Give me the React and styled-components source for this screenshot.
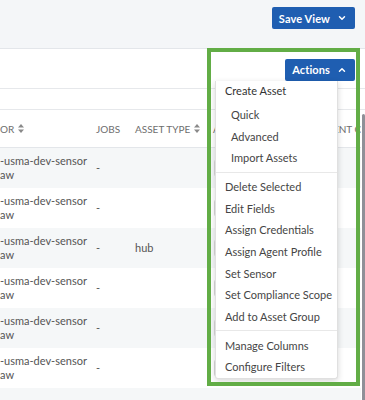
import React from "react";
import styled, { createGlobalStyle } from "styled-components";
import { ChevronDown, ChevronUp } from "lucide-react";

const GlobalStyle = createGlobalStyle`
  html, body {
    margin: 0;
    padding: 0;
    background: #ffffff;
    font-family: Lato, "Liberation Sans", Arial, sans-serif;
  }
  * { box-sizing: border-box; }
`;

const rows = [
    { host: "-usma-dev-sensor", sub: "aw", jobs: "-", type: "" },
    { host: "-usma-dev-sensor", sub: "aw", jobs: "-", type: "" },
    { host: "-usma-dev-sensor", sub: "aw", jobs: "-", type: "hub" },
    { host: "-usma-dev-sensor", sub: "aw", jobs: "-", type: "" },
    { host: "-usma-dev-sensor", sub: "aw", jobs: "-", type: "" },
    { host: "-usma-dev-sensor", sub: "aw", jobs: "-", type: "" },
    { host: "", sub: "", jobs: "", type: "" },
];

const menu = [
    { label: "Create Asset", kind: "header" },
    { label: "Quick", kind: "sub" },
    { label: "Advanced", kind: "sub" },
    { label: "Import Assets", kind: "sub" },
    { kind: "divider" },
    { label: "Delete Selected" },
    { label: "Edit Fields" },
    { label: "Assign Credentials" },
    { label: "Assign Agent Profile" },
    { label: "Set Sensor" },
    { label: "Set Compliance Scope" },
    { label: "Add to Asset Group" },
    { kind: "divider" },
    { label: "Manage Columns" },
    { label: "Configure Filters" },
];

function SortIcon() {
    return (
        <svg width="6" height="9" viewBox="0 0 6 9">
            <path d="M3 0 L6 3.4 H0 Z" fill="#8a8a8a"/>
            <path d="M3 9 L6 5.6 H0 Z" fill="#8a8a8a"/>
        </svg>
    )
}

export default function App() {
    return (
        <Page>
            <GlobalStyle/>
            <TopBar>
                <BlueButton>
                    Save View <ChevronDown size={10} strokeWidth={3.5}/>
                </BlueButton>
            </TopBar>

            <Toolbar>
                <ActionWrap>
                    <BlueButton>
                        Actions <ChevronUp size={10} strokeWidth={3.5}/>
                    </BlueButton>
                    <Menu>
                        {menu.map((item, i) => {
                            if (item.kind === "divider") return <Divider key={i}/>
                            if (item.kind === "header") return <MenuHeader key={i}>{item.label}</MenuHeader>
                            return <MenuItem key={i} $sub={item.kind === "sub"}>{item.label}</MenuItem>
                        })}
                    </Menu>
                </ActionWrap>
            </Toolbar>

            <Spacer/>

            <TableArea>
                <Table>
                    <HeadRow>
                        <HeadCell>OR <SortIcon/></HeadCell>
                        <HeadCell>JOBS</HeadCell>
                        <HeadCell>ASSET TYPE <SortIcon/></HeadCell>
                        <HeadCell>AGENT</HeadCell>
                        <HeadCell>AGENT COUNT</HeadCell>
                    </HeadRow>
                    {rows.map((r, i) => (
                        <Row key={i} $striped={i % 2 === 0}>
                            <Cell>{r.host}<br/>{r.sub}</Cell>
                            <Cell>{r.jobs}</Cell>
                            <Cell>{r.type}</Cell>
                            <Cell>{r.host && <FieldBox/>}</Cell>
                            <Cell/>
                        </Row>
                    ))}
                </Table>
                <ScrollTrack>
                    <Thumb/>
                </ScrollTrack>
            </TableArea>

            <Highlight/>
        </Page>
    )
}

const Page = styled.div`
  position: relative;
  width: 365px;
  height: 400px;
  overflow: hidden;
`

const TopBar = styled.div`
  height: 49px;
  background: #f4f6f8;
  border-bottom: 1px solid #e3e6ea;
  display: flex;
  justify-content: flex-end;
  align-items: flex-start;
  padding: 7px 10px 0 0;
`

const BlueButton = styled.button`
  height: 22px;
  display: inline-flex;
  align-items: center;
  gap: 7px;
  padding: 0 8px 0 7px;
  border: none;
  border-radius: 2px;
  background: #1f5eb1;
  color: #ffffff;
  font-family: inherit;
  font-size: 11px;
  font-weight: 700;
  letter-spacing: 0.1px;
  cursor: pointer;
`

const Toolbar = styled.div`
  height: 40px;
  border-bottom: 1px solid #e6e8eb;
  display: flex;
  justify-content: flex-end;
  align-items: flex-start;
  padding: 9px 10px 0 0;
`

const ActionWrap = styled.div`
  position: relative;
  z-index: 2;
`

const Menu = styled.div`
  position: absolute;
  top: 100%;
  right: 17px;
  width: 123px;
  background: #ffffff;
  border: 1px solid #e0e0e0;
  border-top: none;
  border-radius: 0 0 3px 3px;
  box-shadow: 0 2px 6px rgba(0, 0, 0, 0.16);
`

const MenuHeader = styled.div`
  height: 20px;
  margin-bottom: 3px;
  display: flex;
  align-items: center;
  padding-left: 9px;
  font-size: 11px;
  color: #333333;
`

const MenuItem = styled.div`
  height: 21.7px;
  display: flex;
  align-items: center;
  padding-left: ${p => p.$sub ? "15px" : "9px"};
  font-size: 11px;
  color: #454545;
  white-space: nowrap;
`

const Divider = styled.div`
  height: 1px;
  margin: 3px 0;
  background: #e8e8e8;
`

const Spacer = styled.div`
  height: 21px;
  border-bottom: 1px solid #e6e8eb;
`

const TableArea = styled.div`
  display: flex;
`

const Table = styled.div`
  flex: 1;
  overflow: hidden;
`

const grid = `
  display: grid;
  grid-template-columns: 96px 39px 78px 106px 1fr;
`

const HeadRow = styled.div`
  ${grid}
  height: 38px;
  align-items: center;
  border-bottom: 1px solid #e3e6ea;
`

const HeadCell = styled.div`
  display: flex;
  align-items: center;
  gap: 4px;
  font-size: 10px;
  color: #6e6e6e;
  white-space: nowrap;
`

const Row = styled.div`
  ${grid}
  height: 40px;
  align-items: center;
  background: ${p => p.$striped ? "#f5f7f8" : "#ffffff"};
`

const Cell = styled.div`
  font-size: 11px;
  line-height: 14px;
  color: #555555;
  white-space: nowrap;
`

const FieldBox = styled.div`
  width: 80px;
  height: 18px;
  margin-left: 1px;
  border: 1px solid #d8d8d8;
  border-radius: 3px;
  background: #ffffff;
`

const ScrollTrack = styled.div`
  width: 4px;
  padding-top: 4px;
  display: flex;
  flex-direction: column;
`

const Thumb = styled.div`
  flex: 1;
  width: 3px;
  margin-left: 1px;
  border-radius: 2px 2px 0 0;
  background: #8f9098;
`

const Highlight = styled.div`
  position: absolute;
  left: 207px;
  top: 48px;
  width: 153px;
  height: 338px;
  border: 4px solid #62ad46;
  pointer-events: none;
  z-index: 3;
`
